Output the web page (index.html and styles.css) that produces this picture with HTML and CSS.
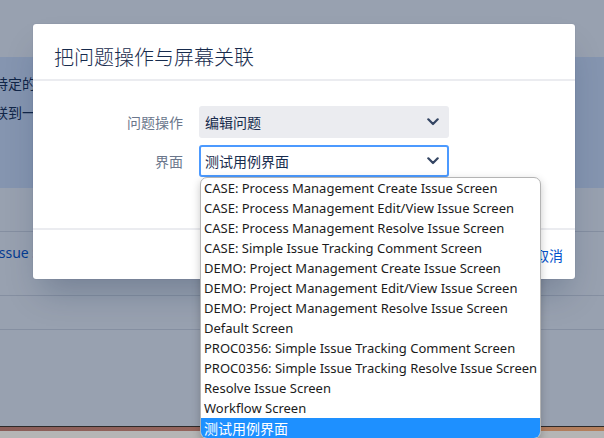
FILE: index.html
```html
<!DOCTYPE html>
<html lang="zh">
<head>
<meta charset="utf-8">
<title>把问题操作与屏幕关联</title>
<link rel="stylesheet" href="styles.css">
</head>
<body>
<div class="screen">
  <div class="page">
    <div class="page-top"></div>
    <div class="info">
      <p class="info-line l1">特定的</p>
      <p class="info-line l2">联到一</p>
    </div>
    <div class="page-row gap-row"></div>
    <div class="page-row link-row"><span class="page-link">Issue S</span></div>
    <div class="page-row thin-row"></div>
    <div class="page-rest"></div>
  </div>
  <div class="blanket"></div>
  <div class="dialog" role="dialog">
    <header class="dlg-head"><h2 class="dlg-title">把问题操作与屏幕关联</h2></header>
    <div class="dlg-body">
      <div class="field">
        <label class="field-label">问题操作</label>
        <div class="select sel-plain">
          <span class="sel-value">编辑问题</span>
          <svg class="chev" width="12" height="8" viewBox="0 0 12 8"><path d="M1.3 1.3 L6 6 L10.7 1.3" fill="none" stroke="#344563" stroke-width="2.2" stroke-linecap="round" stroke-linejoin="round"/></svg>
        </div>
      </div>
      <div class="field">
        <label class="field-label">界面</label>
        <div class="select sel-focus">
          <span class="sel-value">测试用例界面</span>
          <svg class="chev" width="12" height="8" viewBox="0 0 12 8"><path d="M1.3 1.3 L6 6 L10.7 1.3" fill="none" stroke="#344563" stroke-width="2.2" stroke-linecap="round" stroke-linejoin="round"/></svg>
          <ul class="options">
            <li>CASE: Process Management Create Issue Screen</li>
            <li>CASE: Process Management Edit/View Issue Screen</li>
            <li>CASE: Process Management Resolve Issue Screen</li>
            <li>CASE: Simple Issue Tracking Comment Screen</li>
            <li>DEMO: Project Management Create Issue Screen</li>
            <li>DEMO: Project Management Edit/View Issue Screen</li>
            <li>DEMO: Project Management Resolve Issue Screen</li>
            <li>Default Screen</li>
            <li>PROC0356: Simple Issue Tracking Comment Screen</li>
            <li>PROC0356: Simple Issue Tracking Resolve Issue Screen</li>
            <li>Resolve Issue Screen</li>
            <li>Workflow Screen</li>
            <li class="selected cjk">测试用例界面</li>
          </ul>
        </div>
      </div>
    </div>
    <footer class="dlg-foot"><a class="cancel" href="#">取消</a></footer>
  </div>
</div>
<div class="taskbar"></div>
</body>
</html>
```

FILE: styles.css
```css
* { box-sizing: border-box; }
html, body { margin: 0; padding: 0; }
body {
  width: 604px;
  height: 438px;
  overflow: hidden;
  font-family: "Noto Sans CJK SC", "Noto Sans", sans-serif;
  font-size: 14px;
  color: #172b4d;
  background: #b5b5b5;
}
.screen {
  position: relative;
  height: 426px;
}
.page {
  display: flex;
  flex-direction: column;
  height: 426px;
  background: #fff;
  overflow: hidden;
}
.page-top { height: 57px; flex: none; }
.info {
  height: 131px;
  flex: none;
  background: #deebff;
  padding-top: 12px;
}
.info-line {
  margin: 0;
  line-height: 29px;
  white-space: nowrap;
  color: #172b4d;
}
.l1 { margin-left: -6px; }
.l2 { margin-left: -6px; }
.page-row { flex: none; border-bottom: 1px solid #dfe1e6; }
.gap-row { height: 44px; }
.link-row { height: 64px; padding-top: 10px; line-height: 20px; }
.page-link { margin-left: -6px; color: #0052cc; font-family: "Noto Sans", sans-serif; }
.thin-row { height: 34px; }
.page-rest { flex: 1; }

.blanket {
  position: absolute;
  inset: 0;
  background: rgba(9, 30, 66, 0.42);
}

.dialog {
  position: absolute;
  left: 33px;
  top: 24px;
  width: 542px;
  background: #fff;
  border-radius: 3px;
  box-shadow: 0 0 1px rgba(9, 30, 66, 0.31), 0 20px 32px -8px rgba(9, 30, 66, 0.25);
}
.dlg-head {
  padding: 22px 21px 11px;
  border-bottom: 2px solid #ebecf0;
}
.dlg-title {
  margin: 0;
  font-size: 20px;
  line-height: 22px;
  font-weight: 300;
  color: #172b4d;
}
.dlg-body {
  padding: 25px 20px 51px;
  display: flex;
  flex-direction: column;
  gap: 7px;
}
.field {
  display: flex;
  align-items: center;
}
.field-label {
  width: 130px;
  margin-right: 16px;
  text-align: right;
  color: #6b778c;
  font-size: 14px;
}
.select {
  position: relative;
  width: 250px;
  height: 32px;
  border: 2px solid #ebecf0;
  border-radius: 3px;
  display: flex;
  align-items: center;
  justify-content: space-between;
  padding: 0 8px 0 4px;
  color: #172b4d;
}
.sel-plain { background: #ebecf0; }
.sel-focus { background: #fff; border-color: #4c9aff; }
.sel-value { line-height: 20px; }
.chev { display: block; flex: none; }

.options {
  position: absolute;
  top: calc(100% + 2px);
  left: -1px;
  width: 341px;
  margin: 0;
  padding: 0;
  list-style: none;
  background: #fff;
  border: 1px solid #b4b4b4;
  border-radius: 7px;
  box-shadow: 0 3px 8px rgba(0, 0, 0, 0.22);
  overflow: hidden;
  z-index: 5;
}
.options li {
  height: 20px;
  line-height: 20px;
  padding-left: 3px;
  white-space: nowrap;
  font-family: "Noto Sans", "Noto Sans CJK SC", sans-serif;
  font-size: 13px;
  color: #1b1b1b;
}
.options li.cjk {
  font-family: "Noto Sans CJK SC", sans-serif;
  font-size: 14px;
}
.options li.selected {
  background: #1e90ff;
  color: #fff;
}

.dlg-foot {
  height: 51px;
  border-top: 2px solid #ebecf0;
  display: flex;
  align-items: center;
  justify-content: flex-end;
  padding-right: 12px;
}
.cancel {
  color: #0052cc;
  text-decoration: none;
  font-size: 14px;
  line-height: 20px;
}

.taskbar {
  height: 12px;
  background:
    linear-gradient(to bottom, #2d2a2a 0 1px, transparent 1px 5px, #b5b5b5 5px),
    linear-gradient(to right, #8a5d58, #9a685d 50%, #b5805c);
}
```
